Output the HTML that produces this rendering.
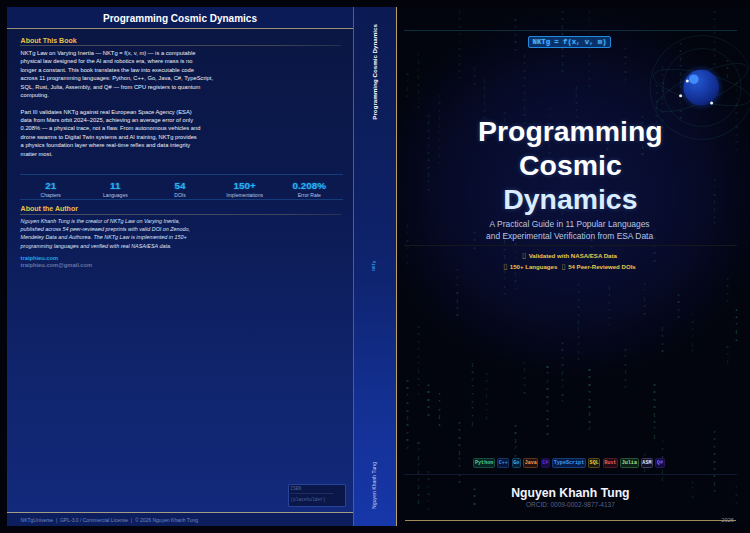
<!DOCTYPE html>
<html lang="en">
<head>
<meta charset="utf-8">
<title>Programming Cosmic Dynamics — Cover</title>
<style>
*{box-sizing:border-box;margin:0;padding:0}
html,body{width:750px;height:533px;overflow:hidden;background:#02030b}
body{position:relative;font-family:"Liberation Sans",sans-serif;color:#e3e9f7}
.abs{position:absolute}
/* ---------- BACK ---------- */
.back{position:absolute;left:7px;top:7px;width:346px;height:519px;overflow:hidden;
 background:linear-gradient(180deg,#0a1642 0%,#0b194f 35%,#10246c 70%,#132a7d 100%)}
.back .hdr{position:absolute;left:0;top:0;width:347px;height:21.5px;background:#0b1b58;border-bottom:1px solid #9c9273}
.back .hdr h2{position:absolute;left:0;width:346px;top:6.1px;text-align:center;font-size:10px;line-height:12px;font-weight:bold;color:#fff;white-space:nowrap}
.sec{position:absolute;left:13.6px;width:320px;font-size:7px;font-weight:bold;color:#e9c349;line-height:8px;white-space:nowrap}
.rule{position:absolute;left:13px;width:321px;height:1px;background:linear-gradient(90deg,rgba(150,140,110,.46),rgba(150,140,110,.38) 80%,rgba(150,140,110,.2))}
.body{position:absolute;left:13.6px;width:330px;font-size:5.77px;line-height:8.48px;color:#ecf0fb;white-space:nowrap}
.body p{margin-bottom:8px}
.stats{position:absolute;left:13px;top:167px;width:323px;height:25.5px;border-top:1px solid #153c7a;border-bottom:1px solid #153c7a}
.stat{position:absolute;top:0;width:64px;text-align:center;white-space:nowrap}
.stat b{display:block;position:absolute;left:0;width:64px;top:5px;font-size:9.85px;line-height:11px;color:#29b0f4;text-shadow:0 0 2px rgba(41,176,244,.55)}
.stat span{display:block;position:absolute;left:0;width:64px;top:16.6px;font-size:5px;line-height:6px;color:#b8c6e6}
.auth{position:absolute;left:13.6px;top:209.9px;font-size:5.4px;line-height:8.3px;font-style:italic;color:#dde4f6;white-space:nowrap}
.lnk1{position:absolute;left:13.6px;top:247.7px;font-size:5.72px;line-height:7px;font-weight:bold;color:#1ea7f2;white-space:nowrap}
.lnk2{position:absolute;left:13.6px;top:255.2px;font-size:5.74px;line-height:7px;font-weight:bold;color:#5f76ad;white-space:nowrap}
.isbn{position:absolute;left:281px;top:477px;width:57.5px;height:22.5px;background:rgba(9,20,64,.85);border:1px solid #27449a;border-radius:1px;
 font-family:"Liberation Mono",monospace;font-size:4.5px;line-height:5.6px;color:#4f6296;padding:0.8px 1.3px;white-space:pre;overflow:hidden}
.foot{position:absolute;left:0;top:505px;width:347px;height:14px;background:#0d1e5e;border-top:1px solid #a59c86}
.foot span{position:absolute;left:13.6px;top:3.6px;font-size:5px;line-height:6px;color:#7386bd;white-space:nowrap}
/* ---------- SPINE ---------- */
.spine{position:absolute;left:353px;top:7px;width:43px;height:519px;
 background:linear-gradient(180deg,#0b1a52 0%,#0d1f60 30%,#0f2470 52%,#133092 76%,#1737aa 100%);border-left:1px solid #4d5d92}
.vt{position:absolute;writing-mode:vertical-rl;transform:rotate(180deg);white-space:nowrap;line-height:1}
/* ---------- FRONT ---------- */
.front{position:absolute;left:396px;top:7px;width:354px;height:519px;overflow:hidden;border-left:1px solid #bb9f5e;
 background:
  radial-gradient(ellipse 195px 185px at 175px 186px,rgb(10,16,58) 0%,rgb(8,13,48) 45%,rgb(6,10,38) 65%,rgb(4,7,25) 85%,rgb(2,4,14) 100%),
  #02040e}
.front .c{position:absolute;left:0.4px;width:346px;text-align:center;white-space:nowrap}
.mx{position:absolute;font-family:"Liberation Mono",monospace;font-weight:bold;font-size:4.2px;line-height:7.4px;color:#3f9a8c;text-align:center;width:3px}
.hl{position:absolute;left:7px;width:333px;height:1px}
.eq{position:absolute;left:131.3px;top:28.5px;width:82.6px;height:12.2px;border:1px solid #1f8be0;border-radius:2px;background:rgba(14,74,150,.62);
 font-family:"Liberation Mono",monospace;font-weight:bold;font-size:7.25px;line-height:10.2px;color:#4db4fb;text-align:center;white-space:nowrap;text-shadow:0 0 2px rgba(40,150,240,.6)}
.title{top:106.5px;font-size:28.4px;line-height:34.1px;font-weight:bold;color:#fff;text-shadow:0 0 5px rgba(120,170,255,.3)}
.title span{display:block}
.sub{top:210.7px;margin-left:-0.8px;font-size:8.44px;line-height:12.1px;color:#b9c5e2}
.feat{margin-left:-0.9px;font-size:6.08px;line-height:8px;font-weight:bold;color:#efc650}
.feat i{font-style:normal;font-weight:normal;font-family:"DejaVu Sans",sans-serif;color:#9a8442;font-size:7.6px;line-height:8px;margin-right:0.7px;position:relative;top:0.3px}
.tags{position:absolute;left:76.4px;top:451.3px;height:10px;white-space:nowrap;font-size:0}
.tag{display:inline-block;height:10px;margin-right:2.2px;padding:0 0.6px;border:1px solid;border-radius:1.5px;font-family:"Liberation Mono",monospace;font-weight:bold;font-size:5.08px;line-height:8px;vertical-align:top}
.name{top:478.6px;font-size:12.2px;line-height:14px;font-weight:bold;color:#f2f5ff}
.orcid{top:493.6px;font-size:6.5px;line-height:8px;color:#56638c}
</style>
</head>
<body>

<!-- ================= BACK COVER ================= -->
<div class="back">
  <div class="hdr"><h2>Programming Cosmic Dynamics</h2></div>

  <div class="sec" style="top:29.5px">About This Book</div>
  <div class="rule" style="top:38px"></div>
  <div class="body" style="top:41.6px">
    <p>NKTg Law on Varying Inertia — NKTg = f(x, v, m) — is a computable<br>physical law designed for the AI and robotics era, where mass is no<br>longer a constant. This book translates the law into executable code<br>across 11 programming languages: Python, C++, Go, Java, C#, TypeScript,<br>SQL, Rust, Julia, Assembly, and Q# — from CPU registers to quantum<br>computing.</p>
    <p>Part III validates NKTg against real European Space Agency (ESA)<br>data from Mars orbit 2024–2025, achieving an average error of only<br>0.208% — a physical trace, not a flaw. From autonomous vehicles and<br>drone swarms to Digital Twin systems and AI training, NKTg provides<br>a physics foundation layer where real-time reflex and data integrity<br>matter most.</p>
  </div>

  <div class="stats">
    <div class="stat" style="left:-1.3px"><b>21</b><span>Chapters</span></div>
    <div class="stat" style="left:63.3px"><b>11</b><span>Languages</span></div>
    <div class="stat" style="left:128px"><b>54</b><span>DOIs</span></div>
    <div class="stat" style="left:192.6px"><b>150+</b><span>Implementations</span></div>
    <div class="stat" style="left:257.3px"><b>0.208%</b><span>Error Rate</span></div>
  </div>

  <div class="sec" style="top:198.2px">About the Author</div>
  <div class="rule" style="top:207px"></div>
  <div class="auth">Nguyen Khanh Tung is the creator of NKTg Law on Varying Inertia,<br>published across 54 peer-reviewed preprints with valid DOI on Zenodo,<br>Mendeley Data and Authorea. The NKTg Law is implemented in 150+<br>programming languages and verified with real NASA/ESA data.</div>
  <div class="lnk1">traiphieu.com</div>
  <div class="lnk2">traiphieu.com@gmail.com</div>

  <div class="isbn">ISBN
────────────────
(placeholder)</div>

  <div class="foot"><span>NKTgUniverse &nbsp;|&nbsp; GPL-3.0 / Commercial License &nbsp;|&nbsp; © 2026 Nguyen Khanh Tung</span></div>
</div>

<!-- ================= SPINE ================= -->
<div class="spine">
  <div class="vt" style="left:17.6px;top:16.6px;font-size:6.22px;font-weight:bold;color:#fff">Programming Cosmic Dynamics</div>
  <div class="vt" style="left:19.2px;top:254.4px;font-size:3.7px;font-weight:bold;color:#2b9af0">NKTg</div>
  <div class="vt" style="left:17.8px;top:455.3px;font-size:5.15px;color:#c3cff0">Nguyen Khanh Tung</div>
</div>

<!-- ================= FRONT COVER ================= -->
<div class="front">
  <div class="rain">
    <div class="mx" style="left:9px;top:64px;opacity:0.22">0<br>/<br>{<br>=</div>
    <div class="mx" style="left:9px;top:216px;opacity:0.16">{<br>+<br>0<br>><br>/<br>+</div>
    <div class="mx" style="left:9px;top:371px;opacity:0.42">=<br>0<br>*<br>x<br>=<br>}<br>0<br>><br>0<br>/</div>
    <div class="mx" style="left:20px;top:45px;opacity:0.22">/<br>}<br>/<br>{<br>x<br>}<br>/<br>1</div>
    <div class="mx" style="left:20px;top:317px;opacity:0.25">x<br>x<br><<br><<br><<br>*<br>}<br>x<br>*<br>></div>
    <div class="mx" style="left:20px;top:433px;opacity:0.42">0<br>/<br>{<br>/<br>{<br>/<br>}<br>1<br>}</div>
    <div class="mx" style="left:30px;top:106px;opacity:0.28">><br>{<br><<br>1<br>/<br>1<br>+<br>><br>}<br>*<br><</div>
    <div class="mx" style="left:30px;top:375px;opacity:0.5">+<br>0<br>0<br>x<br>=</div>
    <div class="mx" style="left:30px;top:462px;opacity:0.25">x<br>0<br>><br>0<br>*<br>+</div>
    <div class="mx" style="left:41px;top:86px;opacity:0.16">><br>0<br>1<br>{<br>+<br>*<br>><br>+<br>{<br>></div>
    <div class="mx" style="left:41px;top:385px;opacity:0.5">*<br>*<br>><br>{<br>1</div>
    <div class="mx" style="left:61px;top:2px;opacity:0.22">}<br>x<br>=<br><<br>/<br>=<br>1<br>x<br>><br>*</div>
    <div class="mx" style="left:59px;top:261px;opacity:0.33">*<br>/<br>*<br>0<br>{<br>1<br>0</div>
    <div class="mx" style="left:61px;top:413px;opacity:0.5">><br><<br>x<br>1<br>}<br>*<br>*<br>1<br>></div>
    <div class="mx" style="left:76px;top:59px;opacity:0.16">}<br>=<br>0</div>
    <div class="mx" style="left:76px;top:223px;opacity:0.28"><<br>x<br>+</div>
    <div class="mx" style="left:74px;top:355px;opacity:0.42">{<br>+<br>/<br>*<br>*<br><<br>*<br>*<br>{</div>
    <div class="mx" style="left:76px;top:479px;opacity:0.5">+<br>=<br>0</div>
    <div class="mx" style="left:86px;top:71px;opacity:0.22">}<br>{<br>{<br>}<br><<br>=<br>0<br>=<br>x</div>
    <div class="mx" style="left:88px;top:364px;opacity:0.25">1<br>=<br>><br>{<br><<br>*<br>}</div>
    <div class="mx" style="left:106px;top:103px;opacity:0.16">0<br>{<br>1</div>
    <div class="mx" style="left:106px;top:225px;opacity:0.28">1<br>{<br>><br>}<br>/<br><<br>/<br>1<br><</div>
    <div class="mx" style="left:117px;top:10px;opacity:0.28">0<br>1<br><<br>0<br><</div>
    <div class="mx" style="left:117px;top:212px;opacity:0.22">{<br>/<br>0<br>0<br>/<br>/<br>1<br>}<br>0<br><</div>
    <div class="mx" style="left:117px;top:416px;opacity:0.5">><br>=<br>}<br>/<br>><br>*</div>
    <div class="mx" style="left:126px;top:46px;opacity:0.22">{<br>+<br>x<br>x<br><<br>}<br>=<br>{<br>0<br>+<br>=</div>
    <div class="mx" style="left:126px;top:353px;opacity:0.25">><br>}<br>=<br>=<br>0</div>
    <div class="mx" style="left:151px;top:99px;opacity:0.16"><<br>/<br>=<br>}<br>><br>}<br>0<br>x<br>{<br>+</div>
    <div class="mx" style="left:149px;top:357px;opacity:0.5">0<br>*<br>/<br>x<br>=<br>/<br><<br>+<br>><br>x</div>
    <div class="mx" style="left:164px;top:2px;opacity:0.28">x<br>=<br>{<br>0<br>0<br>=<br>=<br>}<br>x</div>
    <div class="mx" style="left:164px;top:189px;opacity:0.28">/<br>1<br>/<br>*<br>+</div>
    <div class="mx" style="left:164px;top:333px;opacity:0.33">+<br>x<br><<br>x<br>{<br>1<br>/<br>0<br>*</div>
    <div class="mx" style="left:178px;top:78px;opacity:0.22">{<br>{<br>=<br>+<br>*<br>*<br>{</div>
    <div class="mx" style="left:180px;top:275px;opacity:0.25"><<br>1<br><<br>x<br>1<br>{<br>{<br>1<br>/<br>1<br>1</div>
    <div class="mx" style="left:191px;top:2px;opacity:0.16">{<br>{<br>*<br>/<br>=<br>x<br>x<br>0<br>><br>x<br>x</div>
    <div class="mx" style="left:193px;top:215px;opacity:0.28">+<br>0<br>x<br><<br>{<br>0</div>
    <div class="mx" style="left:191px;top:360px;opacity:0.5">0<br>x<br>0<br><<br><<br>0<br>}<br>x<br>/</div>
    <div class="mx" style="left:209px;top:117px;opacity:0.28">+<br>}<br>{<br>x</div>
    <div class="mx" style="left:211px;top:278px;opacity:0.25">{<br>1<br><<br><<br><<br>/</div>
    <div class="mx" style="left:227px;top:40px;opacity:0.28">*<br>x<br>*<br>x<br>/</div>
    <div class="mx" style="left:227px;top:183px;opacity:0.22">x<br>/<br>1<br>/<br><<br>1<br>*</div>
    <div class="mx" style="left:227px;top:340px;opacity:0.33">x<br>*<br>=<br>}<br>1<br>></div>
    <div class="mx" style="left:244px;top:107px;opacity:0.28"><<br>*<br>*<br>><br>}<br>0</div>
    <div class="mx" style="left:246px;top:274px;opacity:0.25">1<br>*<br>}<br>x<br>0</div>
    <div class="mx" style="left:246px;top:445px;opacity:0.33"><<br>{<br>}</div>
    <div class="mx" style="left:258px;top:76px;opacity:0.22">1<br>=<br>+<br>1<br>=<br>*<br>x</div>
    <div class="mx" style="left:256px;top:221px;opacity:0.22">/<br>x<br>1<br>0<br>0</div>
    <div class="mx" style="left:256px;top:375px;opacity:0.5">=<br>x<br><<br>=<br>{<br><<br>*<br>{</div>
    <div class="mx" style="left:264px;top:58px;opacity:0.22">}<br><<br>0<br>}<br>{<br>*<br>1<br>+<br>+</div>
    <div class="mx" style="left:264px;top:319px;opacity:0.33">{<br><<br>1<br>0</div>
    <div class="mx" style="left:264px;top:432px;opacity:0.33">/<br>1<br>x<br>*<br>{<br>{</div>
    <div class="mx" style="left:282px;top:34px;opacity:0.28"><<br>+<br>}<br>=<br>}<br>}<br>*<br>><br>/<br>=<br>0</div>
    <div class="mx" style="left:280px;top:285px;opacity:0.33">1<br>0<br><<br>1</div>
    <div class="mx" style="left:294px;top:62px;opacity:0.22">}<br><<br>1<br>x<br>}</div>
    <div class="mx" style="left:294px;top:305px;opacity:0.25">/<br>=<br>/<br>/<br>{<br>*</div>
    <div class="mx" style="left:294px;top:472px;opacity:0.25">+<br>*<br>=</div>
    <div class="mx" style="left:316px;top:2px;opacity:0.22">x<br>+<br>><br>*<br><<br>x<br>><br>0</div>
    <div class="mx" style="left:316px;top:170px;opacity:0.22">+<br>/<br>0<br>{<br>{<br>+<br>*</div>
    <div class="mx" style="left:316px;top:422px;opacity:0.42">><br>1<br>><br>=<br>0<br>=<br>1<br>{<br><</div>
    <div class="mx" style="left:329px;top:51px;opacity:0.28">x<br>x<br>{</div>
    <div class="mx" style="left:329px;top:269px;opacity:0.25"><<br>=<br>><br>></div>
    <div class="mx" style="left:329px;top:337px;opacity:0.25">0<br><<br>}</div>
    <div class="mx" style="left:338px;top:73px;opacity:0.16">x<br>1<br>><br>{<br>0<br><<br>0<br>1<br>0<br>></div>
    <div class="mx" style="left:338px;top:300px;opacity:0.5">1<br>+<br>*<br>{<br>+</div>
    <div class="mx" style="left:338px;top:478px;opacity:0.25">*<br>x<br><</div>
  </div>
  <svg class="abs" style="left:234px;top:10px" width="120" height="140" viewBox="630 17 120 140">
    <defs>
      <radialGradient id="pl" cx="0.36" cy="0.32" r="0.75">
        <stop offset="0" stop-color="#2459cf"/><stop offset="0.45" stop-color="#183ead"/><stop offset="0.85" stop-color="#0f2884"/><stop offset="1" stop-color="#0a1b5c"/>
      </radialGradient>
      <radialGradient id="glow" cx="0.5" cy="0.5" r="0.5">
        <stop offset="0.6" stop-color="#1a48c8" stop-opacity="0.45"/><stop offset="1" stop-color="#1a48c8" stop-opacity="0"/>
      </radialGradient>
    </defs>
    <g fill="none" stroke="#1c5a5c" stroke-opacity="0.32" stroke-width="0.7">
      <circle cx="701" cy="87.5" r="39"/>
      <circle cx="701" cy="87.5" r="52"/>
      <ellipse cx="701" cy="87.5" rx="50" ry="14" transform="rotate(14 701 87.5)"/>
      <ellipse cx="701" cy="87.5" rx="50" ry="14" transform="rotate(-24 701 87.5)"/>
    </g>
    <circle cx="700.2" cy="87.5" r="23" fill="url(#glow)"/>
    <circle cx="700.2" cy="87.5" r="17.8" fill="url(#pl)"/>
    <circle cx="692.8" cy="79.2" r="4.8" fill="#4590ff" fill-opacity="0.92"/>
    <circle cx="686.3" cy="80.9" r="1.5" fill="#e9f4ff"/>
    <circle cx="679.6" cy="95.7" r="1.5" fill="#e9f4ff"/>
    <circle cx="710.6" cy="102.9" r="1.5" fill="#e9f4ff"/>
  </svg>
  <div class="hl" style="top:23px;background:#0d2e3f"></div>
  <div class="eq">NKTg = f(x, v, m)</div>

  <div class="c title"><span>Programming</span><span>Cosmic</span><span style="color:#d9edff">Dynamics</span></div>
  <div class="c sub">A Practical Guide in 11 Popular Languages<br>and Experimental Verification from ESA Data</div>

  <div class="hl" style="top:238.2px;background:#17171e"></div>
  <div class="c feat" style="top:245.2px"><i>▯</i> Validated with NASA/ESA Data</div>
  <div class="c feat" style="top:256px"><i>▯</i> 150+ Languages &nbsp;<i style="margin-left:0.9px">▯</i> 54 Peer-Reviewed DOIs</div>

  <div class="tags">
    <span class="tag" style="color:#4fd68a;border-color:#164d3d;background:#082325">Python</span>
    <span class="tag" style="color:#3b8df0;border-color:#133569;background:#081739">C++</span>
    <span class="tag" style="color:#3fb8ee;border-color:#124463;background:#081c36">Go</span>
    <span class="tag" style="color:#f59a4a;border-color:#633518;background:#231211">Java</span>
    <span class="tag" style="color:#6d2fe0;border-color:#1f0e50;background:#180b45">C#</span>
    <span class="tag" style="color:#3f9cf5;border-color:#143d7c;background:#081a45">TypeScript</span>
    <span class="tag" style="color:#ecc935;border-color:#574c18;background:#1a1812">SQL</span>
    <span class="tag" style="color:#ee5f58;border-color:#4f1b22;background:#230c17">Rust</span>
    <span class="tag" style="color:#9be08c;border-color:#295433;background:#0d201a">Julia</span>
    <span class="tag" style="color:#e4e4f2;border-color:#3d3d57;background:#111127">ASM</span>
    <span class="tag" style="color:#8a5cf2;border-color:#221757;background:#130c3e;margin-right:0">Q#</span>
  </div>

  <div class="hl" style="top:467.3px;background:#0e1932"></div>
  <div class="c name">Nguyen Khanh Tung</div>
  <div class="c orcid">ORCID: 0009-0002-9877-4137</div>
  <div class="hl" style="top:512.6px;left:8px;width:331px;background:#a08a56"></div>
  <div class="abs" style="left:324.6px;top:509.6px;font-size:5.5px;line-height:7px;color:#8c92a8;white-space:nowrap">2026</div>
</div>

</body>
</html>
